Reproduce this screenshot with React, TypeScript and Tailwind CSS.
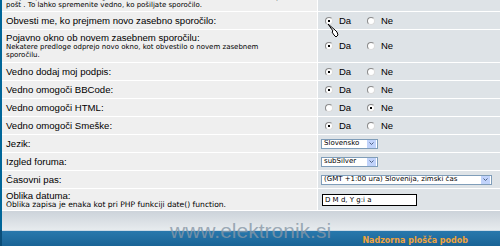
import React from "react";

const Radio = ({ checked }: { checked?: boolean }) => (
  <span className="relative inline-block w-[8px] h-[8px] rounded-full bg-white border border-[#8a8a8a] border-r-[#dcdcdc] border-b-[#dcdcdc] shrink-0">
    {checked && (
      <span className="absolute left-[2px] top-[2px] w-[2px] h-[2px] bg-black" />
    )}
  </span>
);

const YesNo = ({ yes }: { yes: boolean }) => (
  <div className="flex items-center pl-[7px] text-[9.5px] leading-none font-['Liberation_Sans',sans-serif]">
    <div className="flex items-center w-[42px]">
      <Radio checked={yes} />
      <span className="ml-[6px]">Da</span>
    </div>
    <div className="flex items-center">
      <Radio checked={!yes} />
      <span className="ml-[6px]">Ne</span>
    </div>
  </div>
);

const Select = ({ value, width }: { value: string; width: string }) => (
  <div className={`flex items-center h-[10px] ${width} ml-[3px] border border-[#7f9db9] bg-white`}>
    <span className="flex-1 pl-[2px] text-[7px] leading-none whitespace-nowrap overflow-hidden">
      {value}
    </span>
    <span className="w-[9px] h-[8px] mr-px bg-[#c1d3fb] flex items-center justify-center">
      <svg width="5" height="3" viewBox="0 0 5 3">
        <path d="M0.5 0.5 L2.5 2.5 L4.5 0.5" stroke="#4d6185" strokeWidth="1" fill="none" />
      </svg>
    </span>
  </div>
);

const Row = ({
  h,
  left,
  right,
}: {
  h: string;
  left: React.ReactNode;
  right?: React.ReactNode;
}) => (
  <div className={`grid grid-cols-[315px_1fr] gap-px ${h}`}>
    <div className="bg-[#efefef] pl-[4px] flex flex-col justify-center overflow-hidden">
      {left}
    </div>
    <div className="bg-[#dee3e7] flex items-center">{right}</div>
  </div>
);

const Label = ({ children }: { children: React.ReactNode }) => (
  <span className="text-[9.6px] leading-[10px] whitespace-nowrap font-['Liberation_Sans',sans-serif]">
    {children}
  </span>
);

const Small = ({ children, size = "text-[7px]" }: { children: React.ReactNode; size?: string }) => (
  <span className={`${size} leading-[8px] whitespace-nowrap`}>{children}</span>
);

export default function App() {
  return (
    <div className="relative w-[500px] h-[246px] overflow-hidden bg-white text-black font-['DejaVu_Sans',sans-serif]">
      <div className="flex flex-col gap-px border-l-2 border-[#006699] bg-white">
        {/* row cut at the top: only the end of its description shows */}
        <div className="grid grid-cols-[315px_1fr] gap-px h-[11px]">
          <div className="bg-[#efefef] pl-[4px] flex flex-col justify-end pb-[2px] overflow-hidden">
            <Small>Pošlje e-pošto, ko nekdo odgovori na temo, v kateri ste sodelovali. Obvestila po e-</Small>
            <Small>pošt . To lahko spremenite vedno, ko pošiljate sporočilo.</Small>
          </div>
          <div className="bg-[#dee3e7]" />
        </div>
        <Row
          h="h-[17px]"
          left={<Label>Obvesti me, ko prejmem novo zasebno sporočilo:</Label>}
          right={<YesNo yes />}
        />
        <Row
          h="h-[32px]"
          left={
            <>
              <Label>Pojavno okno ob novem zasebnem sporočilu:</Label>
              <Small>Nekatere predloge odprejo novo okno, kot obvestilo o novem zasebnem</Small>
              <Small>sporočilu.</Small>
            </>
          }
          right={<YesNo yes />}
        />
        <Row h="h-[17px]" left={<Label>Vedno dodaj moj podpis:</Label>} right={<YesNo yes />} />
        <Row h="h-[17px]" left={<Label>Vedno omogoči BBCode:</Label>} right={<YesNo yes />} />
        <Row h="h-[17px]" left={<Label>Vedno omogoči HTML:</Label>} right={<YesNo yes={false} />} />
        <Row h="h-[17px]" left={<Label>Vedno omogoči Smeške:</Label>} right={<YesNo yes />} />
        <Row
          h="h-[17px]"
          left={<Label>Jezik:</Label>}
          right={<Select value="Slovensko" width="w-[57px]" />}
        />
        <Row
          h="h-[17px]"
          left={<Label>Izgled foruma:</Label>}
          right={<Select value="subSilver" width="w-[57px]" />}
        />
        <Row
          h="h-[17px]"
          left={<Label>Časovni pas:</Label>}
          right={
            <Select value="(GMT +1:00 ura) Slovenija, zimski čas" width="w-[171px]" />
          }
        />
        <Row
          h="h-[21px]"
          left={
            <>
              <Label>Oblika datuma:</Label>
              <Small size="text-[7.6px]">
                Oblika zapisa je enaka kot pri PHP funkciji date() function.
              </Small>
            </>
          }
          right={
            <div className="ml-[4px] mt-px w-[95px] h-[12px] border border-black bg-white flex items-center pl-[2px] text-[7px] leading-none">
              D M d, Y g:i a
            </div>
          }
        />
        <div className="h-[19px] bg-gradient-to-b from-[#ccd3da] to-[#e7ebee]" />
      </div>
      <div className="h-px bg-[#c9d9e6] border-l-2 border-[#0a4d78]" />
      <div className="h-[15px] border-l-2 border-[#0a4d78] bg-gradient-to-b from-[#2878ad] to-[#1a6496] flex items-center justify-end pr-[32px]">
        <span className="text-[8px] font-bold leading-none text-[#f0a43c] mt-[4px]">
          Nadzorna plošča podob
        </span>
      </div>
      <span className="absolute left-[170px] top-[220px] text-[21px] leading-none font-['Liberation_Sans',sans-serif] text-[#8797a6]/80">
        www.elektronik.si
      </span>
      {/* mouse pointer left in the screenshot */}
      <svg className="absolute left-[327px] top-[23px]" width="12" height="16" viewBox="0 0 12 16">
        <path
          d="M1 1 L6 8 L5 9 L7 12 L9 14 L11 12 L10 9 L8 7 Z"
          fill="white"
          stroke="black"
          strokeWidth="1"
          strokeLinejoin="round"
        />
      </svg>
    </div>
  );
}
